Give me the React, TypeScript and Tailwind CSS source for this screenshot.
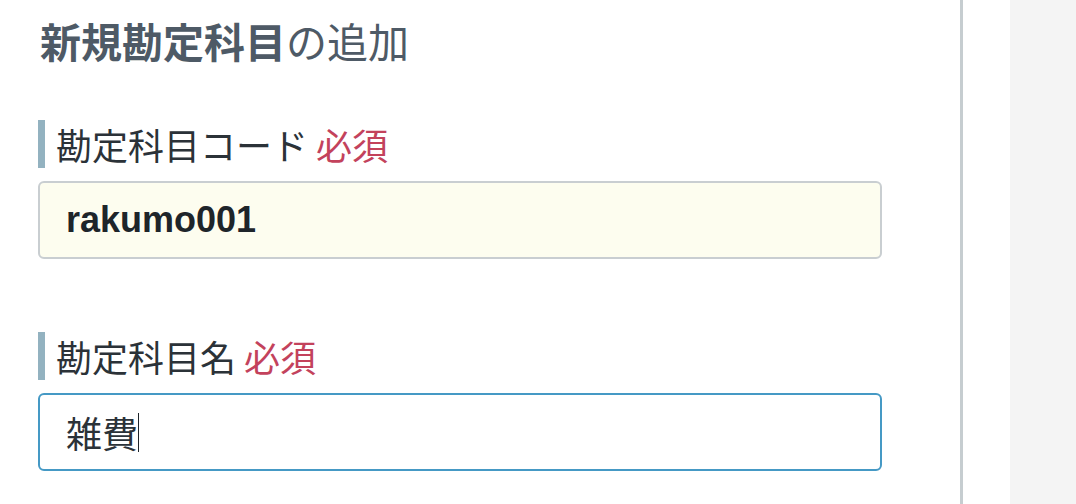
import React from "react";

const CJK = "font-['Noto_Sans_CJK_JP','Noto_Sans',sans-serif]";

function FieldLabel({ text }: { text: string }) {
  return (
    <div className="flex h-[48px] items-center">
      <div className="h-full w-[7px] bg-[#93b2c0]" />
      <span className={`ml-[11px] text-[36px] leading-none text-[#2b3238] ${CJK}`}>
        {text}
        <span className="ml-[8px] text-[#c3425c]">必須</span>
      </span>
    </div>
  );
}

export default function App() {
  return (
    <div className="flex h-[504px] w-[1076px] overflow-hidden bg-white">
      {/* Form panel */}
      <div className="w-[960px] shrink-0 pl-[38px] pt-[20px]">
        <h1 className={`ml-[2px] text-[41px] leading-none text-[#4e5a66] ${CJK}`}>
          <span className="font-bold">新規勘定科目</span>
          <span>の追加</span>
        </h1>

        <div className="mt-[59px]">
          <FieldLabel text="勘定科目コード" />
          <div className="mt-[13px] flex h-[78px] w-[844px] items-center rounded-[6px] border-2 border-[#c9ced1] bg-[#fdfdef] pl-[26px]">
            <span className="font-['Liberation_Sans',Arial,sans-serif] text-[36px] font-bold leading-none text-[#1e252a]">
              rakumo001
            </span>
          </div>
        </div>

        <div className="mt-[73px]">
          <FieldLabel text="勘定科目名" />
          <div className="mt-[13px] flex h-[78px] w-[844px] items-center rounded-[6px] border-2 border-[#4599c5] bg-white pl-[26px]">
            <span className={`text-[36px] leading-none text-[#2b3238] ${CJK}`}>雑費</span>
            <span className="h-[39px] w-px bg-[#1e252a]" />
          </div>
        </div>
      </div>

      {/* Divider */}
      <div className="h-full w-[3px] shrink-0 bg-[#c6cdd0]" />
      <div className="w-[47px] shrink-0 bg-white" />
      <div className="flex-1 bg-[#f4f4f4]" />
    </div>
  );
}
